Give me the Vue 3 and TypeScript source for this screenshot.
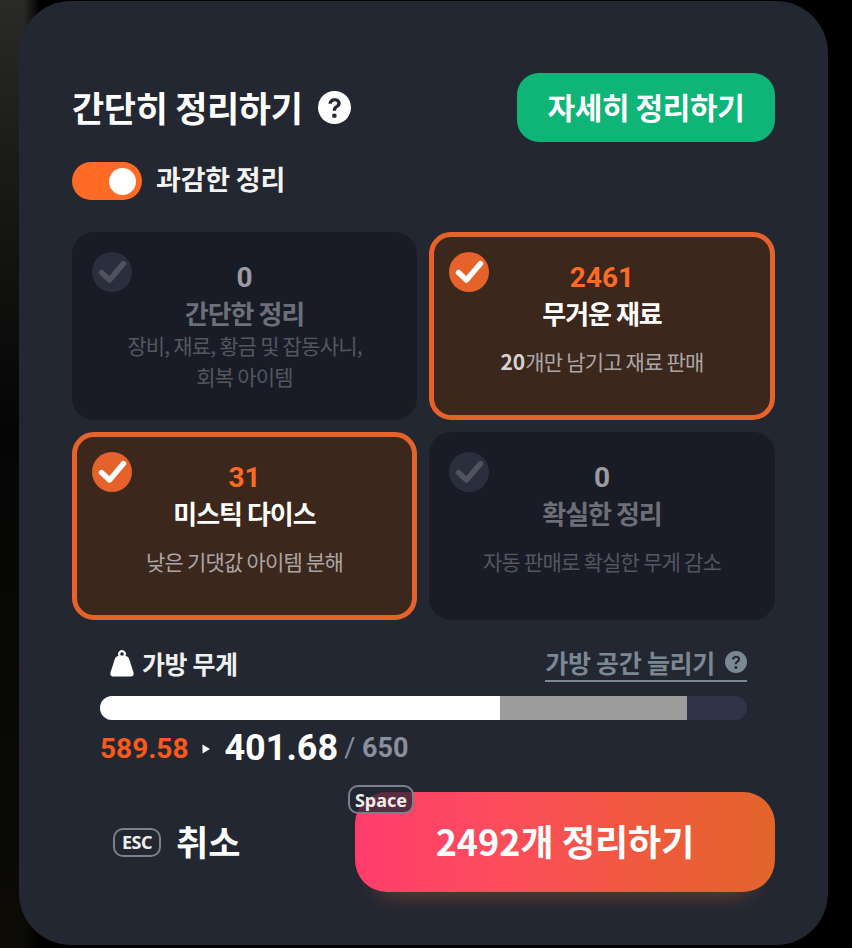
<script setup lang="ts">
interface Card {
  count: string
  title: string
  lines: string[]
  active: boolean
  boldPrefix?: string
}
const cards: Card[] = [
  { count: '0', title: '간단한 정리', lines: ['장비, 재료, 황금 및 잡동사니,', '회복 아이템'], active: false },
  { count: '2461', title: '무거운 재료', lines: ['개만 남기고 재료 판매'], active: true, boldPrefix: '20' },
  { count: '31', title: '미스틱 다이스', lines: ['낮은 기댓값 아이템 분해'], active: true },
  { count: '0', title: '확실한 정리', lines: ['자동 판매로 확실한 무게 감소'], active: false },
]
const segments = [
  { cls: 'white', width: '61.8%' },
  { cls: 'grey', width: '28.9%' },
]
</script>

<template>
  <div class="stage">
    <section class="panel">
      <header class="head">
        <div class="title-wrap">
          <h1 class="title">간단히 정리하기</h1>
          <svg class="help" viewBox="0 0 24 24" aria-hidden="true">
            <circle cx="12" cy="12" r="12" fill="#fff" />
            <path d="M7.6 9.2c.2-2.6 2.1-4 4.5-4 2.5 0 4.4 1.5 4.4 3.7 0 1.6-.9 2.5-2.1 3.3-1 .7-1.3 1.1-1.3 2.2h-2.4c0-1.8.5-2.7 1.8-3.6 1-.7 1.5-1.1 1.5-1.9 0-.9-.8-1.5-1.8-1.500-1.2 0-1.9.7-2.1 1.8z" fill="#232733" />
            <circle cx="11.9" cy="18" r="1.7" fill="#232733" />
          </svg>
        </div>
        <button class="detail-btn">자세히 정리하기</button>
      </header>

      <div class="toggle-row">
        <span class="toggle"><span class="knob"></span></span>
        <span class="toggle-label">과감한 정리</span>
      </div>

      <div class="grid">
        <article v-for="card in cards" :key="card.title" class="card" :class="{ on: card.active }">
          <span class="check">
            <svg viewBox="0 0 40 40" aria-hidden="true">
              <path d="M9.5 20.5l8 7.500L31.500 11.500" fill="none" stroke-width="5.4" stroke-linecap="round" stroke-linejoin="round" />
            </svg>
          </span>
          <div class="count">{{ card.count }}</div>
          <div class="card-title">{{ card.title }}</div>
          <div class="desc" :class="{ spaced: card.active || card.title === '확실한 정리' }">
            <div v-for="line in card.lines" :key="line"><b v-if="card.boldPrefix">{{ card.boldPrefix }}</b>{{ line }}</div>
          </div>
        </article>
      </div>

      <div class="weight">
        <div class="weight-head">
          <div class="weight-label">
            <svg class="kettle" viewBox="0 0 24 29" aria-hidden="true">
              <path d="M12 1a4 4 0 0 1 3.500 5.900c1.700.2 2.900 1 3.500 2.600l4.500 14c.6 2.300-.4 4-2.500 4H3c-2.100 0-3.100-1.700-2.500-4L5 9.500c.6-1.600 1.800-2.400 3.500-2.600A4 4 0 0 1 12 1zm0 2.200a1.800 1.800 0 1 0 0 3.600 1.800 1.800 0 0 0 0-3.600z" fill="#fff" fill-rule="evenodd" />
            </svg>
            <span>가방 무게</span>
          </div>
          <a class="expand">
            <span>가방 공간 늘리기</span>
            <svg class="help-small" viewBox="0 0 24 24" aria-hidden="true">
              <circle cx="12" cy="12" r="12" fill="#7c8794" />
              <path d="M7.6 9.2c.2-2.6 2.1-4 4.500-4 2.500 0 4.400 1.500 4.400 3.700 0 1.600-.9 2.500-2.100 3.300-1 .7-1.300 1.100-1.300 2.200h-2.400c0-1.800.5-2.700 1.800-3.600 1-.7 1.500-1.100 1.500-1.900 0-.9-.8-1.500-1.800-1.500-1.200 0-1.900.7-2.100 1.800z" fill="#232733" />
              <circle cx="11.900" cy="18" r="1.700" fill="#232733" />
            </svg>
          </a>
        </div>
        <div class="bar">
          <span v-for="seg in segments" :key="seg.cls" class="seg" :class="seg.cls" :style="{ width: seg.width }"></span>
        </div>
        <div class="numbers">
          <span class="before">589.58</span>
          <svg class="arrow" viewBox="0 0 8 10" aria-hidden="true"><path d="M0.500 .5L8 5 .5 9.500z" fill="#fff" /></svg>
          <span class="after">401.68</span>
          <span class="max"><i>/</i> 650</span>
        </div>
      </div>

      <footer class="foot">
        <button class="cancel">
          <span class="key esc">ESC</span>
          <span class="cancel-text">취소</span>
        </button>
        <button class="confirm">
          <span class="key space">Space</span>
          2492개 정리하기
        </button>
      </footer>
    </section>
  </div>
</template>

<style>
html, body { margin: 0; background: #000; }
</style>

<style scoped>
.stage {
  width: 852px;
  height: 948px;
  overflow: hidden;
  box-sizing: border-box;
  padding: 1px 24px 0 19px;
  background:
    linear-gradient(90deg, rgba(0, 0, 0, 0) 60%, #000 100%) 0 0 / 40px 100% no-repeat,
    linear-gradient(180deg, #2a2a28 0, #1c1c1a 15%, #050505 45%, #0c0b06 100%) 0 0 / 40px 100% no-repeat,
    #000;
  font-family: "Noto Sans CJK KR", "Noto Sans", sans-serif;
  color: #fff;
}
.panel {
  box-sizing: border-box;
  width: 809px;
  height: 944px;
  padding: 72px 53px 0;
  background: #232731;
  border-radius: 52px;
}
.head {
  display: flex;
  justify-content: space-between;
  align-items: center;
  height: 69px;
}
.title-wrap { display: flex; align-items: center; gap: 15px; }
.title {
  margin: -2px 0 0;
  font-size: 35px;
  line-height: 1;
  font-weight: 700;
  letter-spacing: -0.35px;
}
.help { width: 33px; height: 33px; }
.detail-btn {
  box-sizing: border-box;
  width: 258px;
  height: 69px;
  padding: 0 0 4px;
  border: 0;
  border-radius: 22px;
  background: #0eb576;
  color: #fff;
  font: 700 30px/1 "Noto Sans CJK KR", sans-serif;
  letter-spacing: -0.4px;
}
.toggle-row {
  display: flex;
  align-items: center;
  gap: 14px;
  margin-top: 20px;
  height: 38px;
}
.toggle {
  display: flex;
  justify-content: flex-end;
  align-items: center;
  box-sizing: border-box;
  width: 70px;
  height: 38px;
  padding-right: 6px;
  border-radius: 19px;
  background: #ff6b25;
}
.knob { width: 27px; height: 27px; border-radius: 50%; background: #fff; }
.toggle-label {
  margin-top: -5px;
  font-size: 27px;
  font-weight: 700;
  letter-spacing: -0.2px;
  color: #f3f3f3;
}
.grid {
  display: grid;
  grid-template-columns: 345px 346px;
  grid-template-rows: 188px 188px;
  gap: 12px;
  margin-top: 32px;
}
.card {
  position: relative;
  box-sizing: border-box;
  display: flex;
  flex-direction: column;
  align-items: center;
  padding-top: 28px;
  border-radius: 22px;
  background: #191c27;
  color: #666871;
  text-align: center;
}
.card.on {
  padding-top: 23px;
  border: 5px solid #e6622b;
  background: #3c271c;
  color: #fff;
}
.check {
  position: absolute;
  left: 20px;
  top: 20px;
  width: 40px;
  height: 40px;
  border-radius: 50%;
  background: #2b2f3d;
  stroke: #50535f;
}
.on .check {
  left: 15px;
  top: 15px;
  background: #e6622b;
  stroke: #fff;
}
.check svg { display: block; width: 40px; height: 40px; stroke: inherit; }
.count {
  font-family: Roboto, "Noto Sans", sans-serif;
  font-size: 28px;
  line-height: 36px;
  font-weight: 700;
  color: #9b9ca3;
}
.on .count { color: #ff6b25; }
.card-title {
  margin-top: -1px;
  font-size: 26px;
  line-height: 36px;
  font-weight: 700;
  letter-spacing: -1px;
  color: #6d6f78;
}
.on .card-title { color: #fff; }
.desc {
  margin-top: -1px;
  font-size: 21px;
  line-height: 31px;
  letter-spacing: -0.8px;
  color: #545660;
}
.desc.spaced { margin-top: 15px; }
.on .desc { color: #aaa6a6; }
.desc b { font-weight: 700; color: #d5d2d0; letter-spacing: 0; }
.weight { margin: 24px 28px 0; }
.weight-head {
  display: flex;
  justify-content: space-between;
  align-items: flex-start;
  height: 52px;
}
.weight-label {
  display: flex;
  align-items: center;
  gap: 8px;
  margin: 1px 0 0 10px;
  font-size: 25px;
  line-height: 36px;
  font-weight: 700;
  letter-spacing: -0.4px;
  color: #f0f0f0;
}
.kettle { width: 24px; height: 29px; }
.expand {
  display: flex;
  align-items: center;
  gap: 10px;
  box-sizing: border-box;
  height: 38px;
  border-bottom: 2px solid #7c8794;
  font-size: 25px;
  font-weight: 700;
  letter-spacing: -0.3px;
  color: #7c8794;
}
.help-small { width: 22px; height: 22px; }
.bar {
  display: flex;
  height: 24px;
  overflow: hidden;
  border-radius: 12px;
  background: #2f3448;
}
.seg { display: block; height: 100%; }
.seg.white { background: #fff; }
.seg.grey { background: #9c9c9c; }
.numbers {
  display: flex;
  align-items: center;
  height: 56px;
  font-family: Roboto, "Noto Sans", sans-serif;
  font-weight: 700;
}
.before { font-size: 28px; color: #f9591b; }
.arrow { width: 8px; height: 10px; margin: 2px 14px 0 14px; }
.after { font-size: 36px; color: #fff; }
.max { margin-left: 6px; font-size: 27px; color: #8b8e9b; }
.max i { font-style: normal; font-weight: 400; }
.foot {
  display: flex;
  justify-content: space-between;
  align-items: center;
  margin-top: 16px;
  height: 100px;
}
.foot button { border: 0; font-family: inherit; color: #fff; }
.cancel {
  display: flex;
  align-items: center;
  gap: 15px;
  margin-left: 41px;
  padding: 0;
  background: none;
  font-size: 35px;
  font-weight: 700;
}
.cancel-text { margin-top: -4px; }
.key {
  box-sizing: border-box;
  display: flex;
  align-items: center;
  justify-content: center;
  height: 29px;
  border: 2px solid #7d7f8a;
  border-radius: 10px;
  font-family: "Noto Sans", sans-serif;
  font-size: 18px;
  font-weight: 700;
  color: #eee;
}
.esc { width: 48px; letter-spacing: -0.5px; }
.confirm {
  position: relative;
  width: 420px;
  height: 100px;
  padding: 0 0 4px;
  border-radius: 32px;
  background: linear-gradient(90deg, #ff3d6c 0, #fd4d5c 35%, #ee5a3c 70%, #e3652a 100%);
  box-shadow: 0 26px 24px -26px rgba(255, 120, 60, .4);
  font-size: 36px;
  font-weight: 700;
}
.space {
  position: absolute;
  left: -7px;
  top: -7px;
  width: 66px;
  background: rgba(35, 39, 51, .75);
}
</style>
